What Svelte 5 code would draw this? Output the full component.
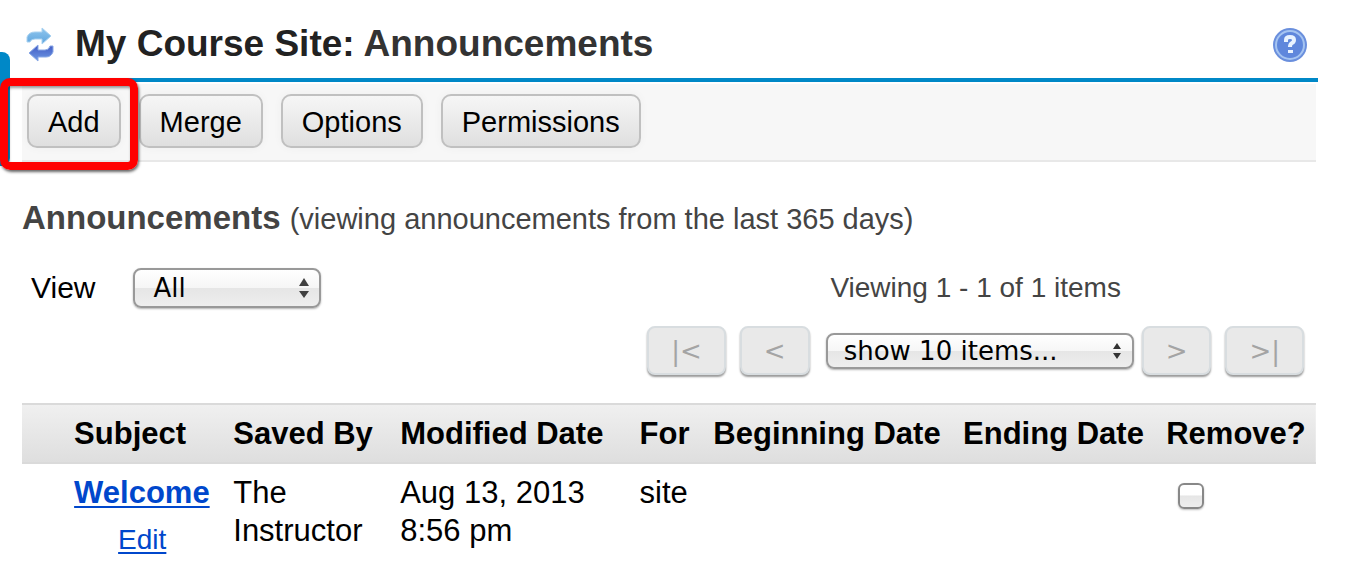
<script>
    let view = 'all';
    let pageSize = '10';

    const tools = ['Add', 'Merge', 'Options', 'Permissions'];

    const columns = [
        { key: 'flag', label: '' },
        { key: 'subject', label: 'Subject' },
        { key: 'author', label: 'Saved By' },
        { key: 'modified', label: 'Modified Date' },
        { key: 'audience', label: 'For' },
        { key: 'begins', label: 'Beginning Date' },
        { key: 'ends', label: 'Ending Date' },
        { key: 'remove', label: 'Remove?' }
    ];

    let announcements = [
        {
            id: 1,
            subject: 'Welcome',
            author: 'The Instructor',
            date: 'Aug 13, 2013',
            time: '8:56 pm',
            audience: 'site',
            begins: '',
            ends: '',
            remove: false
        }
    ];

    $: total = announcements.length;
</script>

<div class="portlet">
    <header class="title-bar">
        <span class="side-tab"></span>
        <button class="icon-button" type="button" aria-label="Reset">
            <svg width="28" height="36" viewBox="0 0 28 36">
                <defs>
                    <linearGradient id="arrow-top" x1="0" y1="0" x2="0" y2="1">
                        <stop offset="0" stop-color="#8fc6ee" />
                        <stop offset="1" stop-color="#5fa5de" />
                    </linearGradient>
                    <linearGradient id="arrow-bottom" x1="0" y1="0" x2="0" y2="1">
                        <stop offset="0" stop-color="#4059c4" />
                        <stop offset="1" stop-color="#6f9ae4" />
                    </linearGradient>
                </defs>
                <path d="M1 15V10Q3 5 9 5H16V1L25 9L16 17V12H9Q5 12 4 15Z" fill="url(#arrow-top)" stroke="#a9d2f1" />
                <path d="M27 19V25Q25 30 20 30H12V34L3 26L12 18V23H19Q23 23 24 19Z" fill="url(#arrow-bottom)" stroke="#89a8e6" />
            </svg>
        </button>
        <h1>My Course Site: <span>Announcements</span></h1>
        <button class="icon-button help" type="button" aria-label="Help">
            <svg width="36" height="36" viewBox="0 0 36 36">
                <circle cx="18" cy="18" r="17" fill="#6a8fdd" />
                <circle cx="18" cy="18" r="14" fill="#5f87dc" stroke="#a5c4f1" stroke-width="2" />
                <path d="M14 15V13Q14 10 18 10Q22 10 22 13Q22 15 20 16Q18 17 18 20" fill="none" stroke="#e9f3ff" stroke-width="4" />
                <rect x="16" y="23" width="5" height="3" fill="#e9f3ff" />
            </svg>
        </button>
    </header>

    <main>
        <nav class="toolbar" aria-label="Announcement tools">
            {#each tools as tool}
                <button type="button">{tool}</button>
            {/each}
            <span class="highlight"></span>
        </nav>

        <h2>Announcements <small>(viewing announcements from the last 365 days)</small></h2>

        <div class="controls">
            <div class="view">
                <label for="view">View</label>
                <div class="picker">
                    <select id="view" bind:value={view}>
                        <option value="all">All</option>
                        <option value="public">Public</option>
                    </select>
                    <svg width="10" height="22" viewBox="0 0 10 22">
                        <path d="M5 1L10 9H0ZM0 14H10L5 21Z" fill="#404040" />
                    </svg>
                </div>
            </div>

            <div class="pager">
                <p>Viewing 1 - {total} of {total} items</p>
                <div class="pager-row">
                    <div class="pager-buttons">
                        <button type="button" aria-label="First page" disabled>|&lt;</button>
                        <button type="button" aria-label="Previous page" disabled>&lt;</button>
                    </div>
                    <div class="picker page-size">
                        <select aria-label="Page size" bind:value={pageSize}>
                            <option value="5">show 5 items...</option>
                            <option value="10">show 10 items...</option>
                            <option value="20">show 20 items...</option>
                        </select>
                        <svg width="10" height="18" viewBox="0 0 10 18">
                            <path d="M5 1L9 7H1ZM1 11H9L5 17Z" fill="#333" />
                        </svg>
                    </div>
                    <div class="pager-buttons">
                        <button type="button" aria-label="Next page" disabled>&gt;</button>
                        <button type="button" aria-label="Last page" disabled>&gt;|</button>
                    </div>
                </div>
            </div>
        </div>

        <table>
            <colgroup>
                {#each columns as column}
                    <col class={column.key} />
                {/each}
            </colgroup>
            <thead>
                <tr>
                    {#each columns as column}
                        <th scope="col">{column.label}</th>
                    {/each}
                </tr>
            </thead>
            <tbody>
                {#each announcements as item (item.id)}
                    <tr>
                        <td></td>
                        <td>
                            <a class="subject-link" href="#announcement">{item.subject}</a>
                            <div class="actions"><a href="#edit">Edit</a></div>
                        </td>
                        <td>{item.author}</td>
                        <td>{item.date}<br />{item.time}</td>
                        <td>{item.audience}</td>
                        <td>{item.begins}</td>
                        <td>{item.ends}</td>
                        <td>
                            <input type="checkbox" aria-label="Remove {item.subject}" bind:checked={item.remove} />
                        </td>
                    </tr>
                {/each}
            </tbody>
        </table>
    </main>
</div>

<style>
    :global(body) {
        margin: 0;
        background: #fff;
    }

    .portlet {
        font-family: "Liberation Sans", Arial, Helvetica, sans-serif;
        color: #000;
    }

    button,
    select {
        font-family: inherit;
        color: inherit;
    }

    .title-bar {
        position: relative;
        display: flex;
        align-items: center;
        margin-right: 42px;
        padding: 12px 10px 0 26px;
        height: 66px;
        border-bottom: 4px solid #0088c7;
    }

    .side-tab {
        position: absolute;
        left: 0;
        top: 52px;
        width: 10px;
        height: 114px;
        border-radius: 0 8px 8px 0;
        background: #0088c7;
    }

    /* keeps the sidebar tab clear of the rule */
    .title-bar::after {
        content: '';
        position: absolute;
        left: 10px;
        top: 78px;
        width: 12px;
        height: 4px;
        background: #fff;
    }

    .icon-button {
        display: flex;
        padding: 0;
        border: 0;
        background: none;
    }

    .help {
        margin-left: auto;
    }

    h1 {
        margin: 0 0 2px 21px;
        font-size: 37px;
        line-height: 44px;
        color: #222;
    }

    h1 span {
        color: #333;
    }

    main {
        margin: 2px 44px 0 22px;
    }

    .toolbar {
        position: relative;
        display: flex;
        gap: 18px;
        padding: 10px 5px 12px;
        border-bottom: 2px solid #e8e8e8;
        background: #f7f7f7;
    }

    .toolbar button {
        height: 54px;
        padding: 2px 19px 0;
        border: 2px solid #c0c0c0;
        border-radius: 10px;
        background: linear-gradient(#f6f6f6, #dfdfdf);
        box-shadow: 0 0 10px rgba(0, 0, 0, 0.04);
        font-size: 29px;
    }

    .highlight {
        position: absolute;
        left: -22px;
        top: -6px;
        box-sizing: border-box;
        width: 138px;
        height: 92px;
        border: 8px solid #f00;
        border-radius: 10px;
        box-shadow: 1px 2px 3px rgba(0, 0, 0, 0.6), inset 1px 2px 3px rgba(0, 0, 0, 0.4);
        pointer-events: none;
    }

    h2 {
        margin: 36px 0 30px;
        font-size: 33px;
        line-height: 40px;
        color: #444;
    }

    h2 small {
        font-size: 29px;
        font-weight: normal;
        line-height: 1;
    }

    .controls {
        display: flex;
        justify-content: space-between;
        align-items: flex-start;
        padding: 0 12px 0 9px;
    }

    .view {
        display: flex;
        align-items: center;
        gap: 38px;
        font-size: 30px;
    }

    .picker {
        position: relative;
        width: 188px;
    }

    select {
        display: block;
        appearance: none;
        width: 100%;
        height: 40px;
        padding: 0 18px;
        border: 2px solid #999;
        border-radius: 8px;
        background: linear-gradient(#fff, #f6f6f6 50%, #e6e6e6 51%, #eee);
        box-shadow: 0 1px 2px rgba(0, 0, 0, 0.3);
        font-family: "DejaVu Sans", sans-serif;
        font-size: 26px;
    }

    .picker svg {
        position: absolute;
        right: 12px;
        top: 0;
        bottom: 0;
        margin: auto 0;
        pointer-events: none;
    }

    .page-size {
        width: 308px;
        margin-left: 8px;
    }

    .page-size select {
        height: 36px;
        padding: 0 16px;
    }

    .pager p {
        margin: 0 0 18px;
        font-size: 28px;
        line-height: 40px;
        text-align: center;
        color: #444;
    }

    .pager-row,
    .pager-buttons {
        display: flex;
        align-items: center;
        gap: 8px;
    }

    .pager-buttons {
        gap: 14px;
    }

    .pager-buttons button {
        height: 49px;
        padding: 0 22px;
        border: 2px solid #d8dde0;
        border-radius: 8px;
        background: #e9e9e9;
        box-shadow: 0 2px 2px rgba(0, 0, 0, 0.4);
        font-family: "DejaVu Sans", sans-serif;
        font-size: 26px;
        color: #a4a4a4;
    }

    table {
        width: 100%;
        margin-top: 28px;
        border-collapse: collapse;
        table-layout: fixed;
        font-size: 31px;
        line-height: 38px;
    }

    .flag {
        width: 3.1%;
    }

    .subject {
        width: 12.3%;
    }

    .author {
        width: 12.9%;
    }

    .modified {
        width: 18.5%;
    }

    .audience {
        width: 5.7%;
    }

    .begins {
        width: 19.3%;
    }

    .ends {
        width: 15.7%;
    }

    .remove {
        width: 12.5%;
    }

    thead {
        background: linear-gradient(#f0f0f0, #dedede);
    }

    th {
        padding: 10px 0 9px 12px;
        border-top: 2px solid #dadada;
        border-bottom: 2px solid #dadada;
        text-align: left;
        white-space: nowrap;
    }

    td {
        padding: 10px 0 0 12px;
        vertical-align: top;
    }

    a {
        color: #0047cc;
        text-decoration-thickness: 2px;
        text-underline-offset: 3px;
    }

    .subject-link {
        font-weight: bold;
    }

    .actions {
        margin: 9px 0 0 44px;
        font-size: 28px;
    }

    input[type='checkbox'] {
        display: block;
        appearance: none;
        width: 26px;
        height: 26px;
        margin: 9px 0 0 12px;
        border: 2px solid #888;
        border-radius: 6px;
        background: linear-gradient(#fff 45%, #e6e6e6 50%, #eee);
        box-shadow: 0 1px 2px rgba(0, 0, 0, 0.25);
    }

    input[type='checkbox']:checked {
        background: #5f87dc;
    }
</style>
